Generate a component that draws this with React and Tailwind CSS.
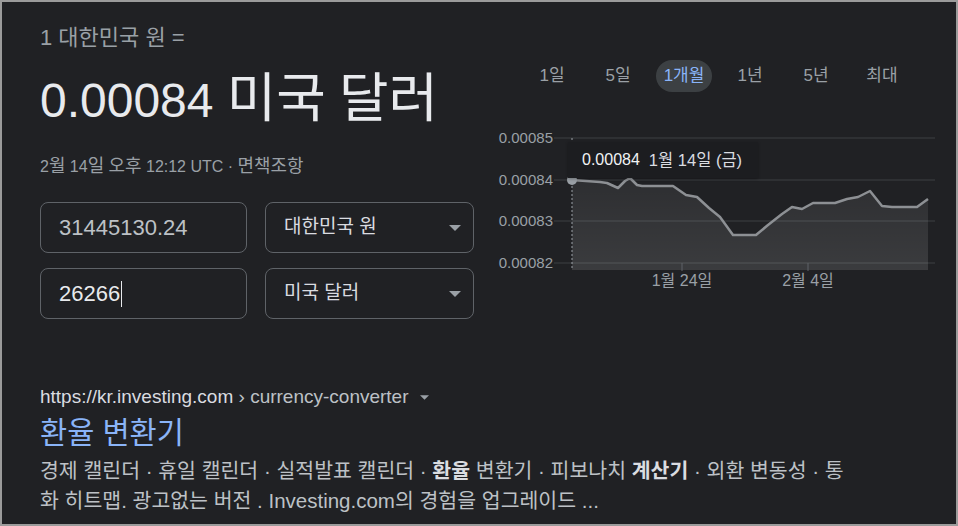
const FONT = "font-['Liberation_Sans','Noto_Sans_CJK_KR',sans-serif]";

const TABS = ['1일', '5일', '1개월', '1년', '5년', '최대'];

const POINTS = [
  [82, 55], [110, 57], [117, 58], [128, 63], [135, 56], [140, 53], [147, 60], [152, 61],
  [183, 61], [196, 70], [207, 72], [219, 83], [230, 92], [243, 110], [266, 110], [278, 100],
  [292, 89], [302, 82], [312, 84], [323, 78], [345, 78], [357, 74], [368, 72], [380, 66],
  [392, 81], [402, 82], [427, 82], [438, 74],
];

const GRID = [
  { y: 13, label: '0.00085' },
  { y: 55, label: '0.00084' },
  { y: 96, label: '0.00083' },
  { y: 138, label: '0.00082' },
];

// hangul in the reference renders a bit larger than the latin text around it
function K({ children }) {
  return <span className="text-[1.12em] leading-none">{children}</span>;
}

function Caret({ className }) {
  return (
    <svg className={className} viewBox="0 0 12 6" fill="#9aa0a6">
      <polygon points="0,0 12,0 6,6" />
    </svg>
  );
}

function Chart() {
  const line = POINTS.map(([x, y]) => `${x},${y}`).join(' ');
  const area = `82,145 ${line} 438,145`;
  return (
    <div className="relative mt-[33px]">
      <svg width="458" height="170" className="block">
        <defs>
          <linearGradient id="fillGrad" x1="0" y1="0" x2="0" y2="1">
            <stop offset="0%" stopColor="#ffffff" stopOpacity="0.06" />
            <stop offset="100%" stopColor="#ffffff" stopOpacity="0.12" />
          </linearGradient>
        </defs>
        {GRID.map((g) => (
          <g key={g.label}>
            <line x1="64" x2="445" y1={g.y} y2={g.y} stroke="#3c4043" strokeWidth="1" />
            <text x="63" y={g.y + 5} textAnchor="end" fill="#9aa0a6" fontSize="15" fontFamily="Liberation Sans, sans-serif">
              {g.label}
            </text>
          </g>
        ))}
        <polygon points={area} fill="url(#fillGrad)" />
        <polyline points={line} fill="none" stroke="#8d9094" strokeWidth="2.5" strokeLinejoin="round" />
        <line x1="82" x2="82" y1="13" y2="145" stroke="#9aa0a6" strokeWidth="1" strokeDasharray="2 2" />
        <circle cx="82" cy="55" r="5" fill="#9aa0a6" />
        <line x1="192" x2="192" y1="138" y2="146" stroke="#5f6368" />
        <line x1="318" x2="318" y1="138" y2="146" stroke="#5f6368" />
        <text x="192" y="161" textAnchor="middle" fill="#9aa0a6" fontSize="16" fontFamily="Liberation Sans, Noto Sans CJK KR, sans-serif">
          1월 24일
        </text>
        <text x="318" y="161" textAnchor="middle" fill="#9aa0a6" fontSize="16" fontFamily="Liberation Sans, Noto Sans CJK KR, sans-serif">
          2월 4일
        </text>
      </svg>
      <div className="absolute left-[78px] top-[17px] h-[36px] w-[190px] bg-[#1c1d20] flex items-center gap-[9px] pl-[14px] shadow-[0_1px_3px_rgba(0,0,0,0.3)]">
        <span className="text-[16px] text-[#f1f3f4]">0.00084</span>
        <span className="text-[16.5px] text-[#dadce0]">1월 14일 (금)</span>
      </div>
    </div>
  );
}

export default function App() {
  return (
    <div className={`w-[958px] h-[526px] overflow-hidden border-2 border-[#9b9b9b] bg-[#202124] ${FONT}`}>
      <div className="flex">
        <div className="pl-[38px] pt-[24px] w-[488px] shrink-0">
          <div className="text-[22px] leading-[24px] text-[#9aa0a6]">1 대한민국 원 =</div>
          <div className="mt-[22px] h-[56px] text-[48px] leading-[56px] text-[#e8eaed] whitespace-nowrap">
            0.00084 <K>미국</K> <K>달러</K>
          </div>
          <div className="mt-[29px] h-[20px] text-[16px] leading-[20px] text-[#9aa0a6] whitespace-nowrap">
            2<K>월</K> 14<K>일</K> <K>오후</K> 12:12 UTC · <K>면책조항</K>
          </div>

          <div className="mt-[25px] flex flex-col gap-[15px]">
            <div className="flex gap-[18px]">
              <div className="w-[207px] h-[51px] rounded-[8px] border border-[#5f6368] flex items-center pl-[18px] text-[22px] text-[#bdc1c6]">
                31445130.24
              </div>
              <div className="w-[209px] h-[51px] rounded-[8px] border border-[#5f6368] flex items-center justify-between pl-[18px] pr-[12px] text-[19px] text-[#dadce0]">
                대한민국 원
                <Caret className="w-[12px] h-[6px]" />
              </div>
            </div>
            <div className="flex gap-[18px]">
              <div className="w-[207px] h-[51px] rounded-[8px] border border-[#5f6368] flex items-center pl-[18px] text-[22px] text-[#e8eaed]">
                26266
                <span className="ml-px w-px h-[26px] bg-[#e8eaed]" />
              </div>
              <div className="w-[209px] h-[51px] rounded-[8px] border border-[#5f6368] flex items-center justify-between pl-[18px] pr-[12px] text-[19px] text-[#dadce0]">
                미국 달러
                <Caret className="w-[12px] h-[6px]" />
              </div>
            </div>
          </div>
        </div>

        <div className="pt-[58px]">
          <div className="flex gap-[10px] ml-[34px]">
            {TABS.map((t) => (
              <div
                key={t}
                className={
                  t === '1개월'
                    ? 'w-[56px] h-[32px] rounded-full bg-[#3c4043] text-[#8ab4f8] flex items-center justify-center text-[17px]'
                    : 'w-[56px] h-[32px] rounded-full text-[#9aa0a6] flex items-center justify-center text-[17px]'
                }
              >
                {t}
              </div>
            ))}
          </div>
          <Chart />
        </div>
      </div>

      <div className="pl-[38px] mt-[67px]">
        <div className="flex items-center text-[19px] leading-[22px] whitespace-nowrap">
          <span className="text-[#dadce0]">https://kr.investing.com</span>
          <span className="text-[#bdc1c6]">&nbsp;› currency-converter</span>
          <Caret className="ml-[11px] w-[9px] h-[5px]" />
        </div>
        <div className="mt-[8px] text-[29.5px] leading-[34px] text-[#8ab4f8]">환율 변환기</div>
        <div className="mt-[6px] text-[20.5px] leading-[30px] text-[#bdc1c6] whitespace-nowrap">
          경제 캘린더 · 휴일 캘린더 · 실적발표 캘린더 · <b className="text-[#dadce0]">환율</b> 변환기 · 피보나치 <b className="text-[#dadce0]">계산기</b> · 외환 변동성 · 통
          <br />
          화 히트맵. 광고없는 버전 . Investing.com의 경험을 업그레이드 ...
        </div>
      </div>
    </div>
  );
}
